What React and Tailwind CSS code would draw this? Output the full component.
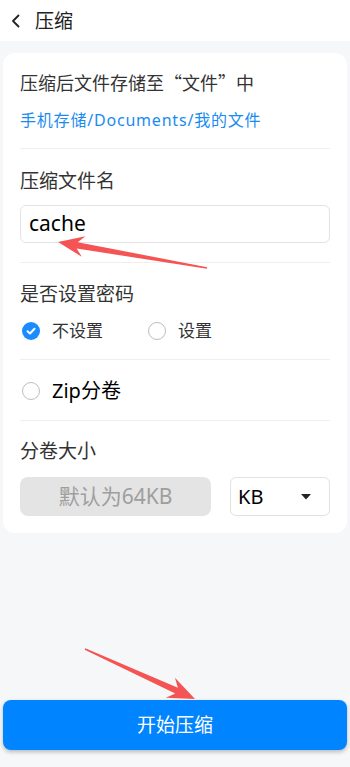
import React from 'react';

const arrowPoints = (tail, tip, headLen = 26, headW = 21) => {
  const dx = tip[0] - tail[0];
  const dy = tip[1] - tail[1];
  const len = Math.hypot(dx, dy);
  const ux = dx / len;
  const uy = dy / len;
  const nx = -uy;
  const ny = ux;
  const at = (d, w) => [tip[0] - ux * d + nx * w, tip[1] - uy * d + ny * w];
  const pts = [
    [tail[0] + nx * 0.8, tail[1] + ny * 0.8],
    at(headLen * 0.75, 3.2),
    at(headLen, headW / 2),
    tip,
    at(headLen, -headW / 2),
    at(headLen * 0.75, -3.2),
    [tail[0] - nx * 0.8, tail[1] - ny * 0.8],
  ];
  return pts.map((p) => p.join(',')).join(' ');
};

const Radio = ({ checked }) =>
  checked ? (
    <span className="w-[18px] h-[18px] rounded-full bg-[#1a8cff] flex items-center justify-center shrink-0">
      <svg width="10" height="10" viewBox="0 0 10 10">
        <path d="M1.5 5.2 L4 7.5 L8.5 2.8" fill="none" stroke="white" strokeWidth="2" strokeLinecap="round" strokeLinejoin="round" />
      </svg>
    </span>
  ) : (
    <span className="w-[18px] h-[18px] rounded-full border border-[#bdbdbd] bg-white shrink-0"></span>
  );

const Divider = () => <div className="h-px bg-[#efefef]"></div>;

export default function App() {
  return (
    <div
      className="relative min-h-screen h-[767px] bg-[#f6f7f9] flex flex-col text-[#333]"
      style={{ fontFamily: '"Noto Sans", "Noto Sans CJK SC", sans-serif' }}
    >
      {/* Header */}
      <div className="h-[41px] bg-white flex items-center px-[11px] shrink-0">
        <svg width="10" height="14" viewBox="0 0 10 14" className="mr-[14px]">
          <path d="M7.5 1.5 L2 7 L7.5 12.5" fill="none" stroke="#222" strokeWidth="1.8" strokeLinecap="round" strokeLinejoin="round" />
        </svg>
        <span className="text-[19px] leading-[24px] text-[#222]">压缩</span>
      </div>

      {/* Card */}
      <div className="mx-[3px] mt-[12px] bg-white rounded-[12px] px-[17px]">
        <div className="pt-[17px] pb-[17px]">
          <div className="text-[18px] leading-[24px] font-['Noto_Sans_CJK_SC',sans-serif]">压缩后文件存储至“文件”中</div>
          <div className="mt-[15px] text-[16px] leading-[22px] tracking-[0.8px] text-[#1a8cf0]">手机存储/Documents/我的文件</div>
        </div>
        <Divider />

        <div className="pt-[20px] pb-[19px]">
          <div className="text-[19px] leading-[24px]">压缩文件名</div>
          <div className="mt-[12px] h-[38px] border border-[#e2e2e2] rounded-[6px] flex items-center px-[8px] text-[21px] text-black">
            cache
          </div>
        </div>
        <Divider />

        <div className="pt-[19px] pb-[16px]">
          <div className="text-[19px] leading-[24px]">是否设置密码</div>
          <div className="mt-[13px] h-[24px] flex items-center pl-[2px]">
            <Radio checked />
            <span className="ml-[12px] text-[17px] text-[#333] w-[96px]">不设置</span>
            <Radio />
            <span className="ml-[12px] text-[17px] text-[#333]">设置</span>
          </div>
        </div>
        <Divider />

        <div className="pt-[19px] pb-[17px]">
          <div className="h-[24px] flex items-center pl-[2px]">
            <Radio />
            <span className="ml-[12px] text-[20px] text-black">Zip分卷</span>
          </div>
        </div>
        <Divider />

        <div className="pt-[18px] pb-[17px]">
          <div className="text-[19px] leading-[24px]">分卷大小</div>
          <div className="mt-[14px] flex items-center gap-[19px]">
            <div className="w-[191px] h-[39px] rounded-[8px] bg-[#e4e4e4] flex items-center justify-center text-[21px] text-[#9e9e9e]">
              默认为64KB
            </div>
            <div className="flex-1 h-[39px] rounded-[6px] border border-[#e2e2e2] flex items-center justify-between pl-[7px] pr-[18px] text-[20px] text-black">
              <span>KB</span>
              <svg width="10" height="6" viewBox="0 0 10 6">
                <path d="M0 0 L10 0 L5 5.5 Z" fill="#222" />
              </svg>
            </div>
          </div>
        </div>
      </div>

      <div className="flex-1"></div>

      {/* Bottom button */}
      <button className="mx-[3px] mb-[17px] h-[50px] rounded-[8px] bg-[#0084ff] text-white text-[19px] shadow-[0_2px_4px_rgba(0,0,0,0.25)]">
        开始压缩
      </button>

      {/* Annotation arrows */}
      <svg className="absolute inset-0 pointer-events-none" width="350" height="767">
        <polygon points={arrowPoints([207, 268], [58, 242], 26, 21)} fill="#f55454" />
        <polygon points={arrowPoints([85, 649], [195, 699], 27, 22)} fill="#f55454" />
      </svg>
    </div>
  );
}
